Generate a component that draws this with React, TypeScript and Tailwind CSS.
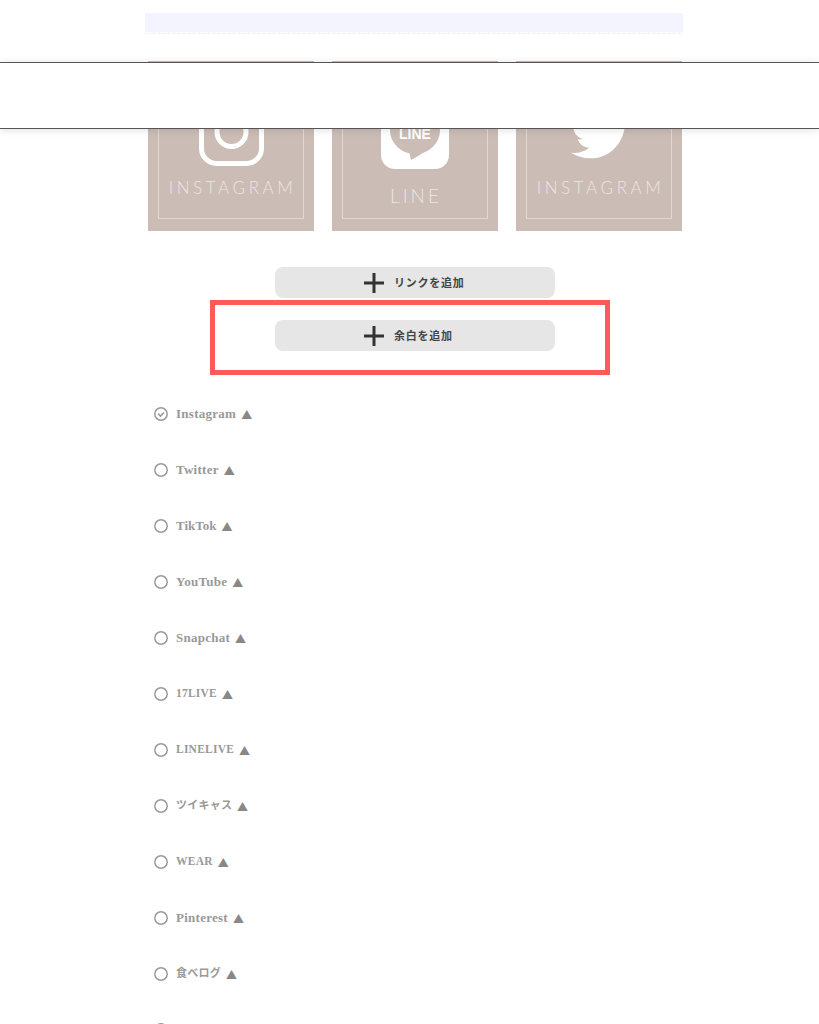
import { FaTwitter } from 'react-icons/fa';

const services = [
  { name: 'Instagram', size: 'text-[13px]' },
  { name: 'Twitter', size: 'text-[13px]' },
  { name: 'TikTok', size: 'text-[13px] tracking-[0px]' },
  { name: 'YouTube', size: 'text-[13px]' },
  { name: 'Snapchat', size: 'text-[13px]' },
  { name: '17LIVE', size: 'text-[11.5px]' },
  { name: 'LINELIVE', size: 'text-[11.5px]' },
  { name: 'ツイキャス', size: 'text-[11px]' },
  { name: 'WEAR', size: 'text-[11.5px]' },
  { name: 'Pinterest', size: 'text-[13px]' },
  { name: '食べログ', size: 'text-[11px]' },
];

const tileLabel =
  "mt-[11px] ml-[3px] font-['Lato'] text-[17px] font-light leading-[22px] tracking-[3.6px] text-[#ece6e2]";

function InstagramIcon() {
  return (
    <svg width="65" height="65" viewBox="0 0 65 65" fill="none" stroke="#fff" strokeWidth="5">
      <rect x="2.5" y="2.5" width="60" height="60" rx="15" />
      <circle cx="32.5" cy="31" r="14.5" />
    </svg>
  );
}

function LineIcon() {
  return (
    <svg width="68" height="68" viewBox="0 0 68 68">
      <rect width="68" height="68" rx="14" fill="#fff" />
      <ellipse cx="34" cy="29" rx="25" ry="24" fill="#cbbcb5" />
      <path d="M28 50 L30 59 C38 55 46 49 52 44 Z" fill="#cbbcb5" />
      <text
        x="34"
        y="38"
        textAnchor="middle"
        fill="#fff"
        fontSize="14"
        fontWeight="700"
        fontFamily="Liberation Sans, sans-serif"
      >
        LINE
      </text>
    </svg>
  );
}

function Tile({ icon, label, labelClass }: { icon: React.ReactNode; label: string; labelClass: string }) {
  return (
    <div className="h-[170px] w-[166px] bg-[#cbbcb5] px-[10px] pt-[12px] pb-[12px]">
      <div className="flex h-full flex-col items-center border border-[#e0d8d2] pt-[27px]">
        <div className="flex h-[65px] items-start justify-center">{icon}</div>
        <div className={labelClass}>{label}</div>
      </div>
    </div>
  );
}

function AddButton({ label, className }: { label: string; className: string }) {
  return (
    <div className={`flex h-[31px] w-[280px] items-center rounded-lg bg-[#e6e6e6] pl-[89px] ${className}`}>
      <svg width="20" height="20" viewBox="0 0 20 20" fill="#333">
        <rect x="0" y="8.5" width="20" height="3" />
        <rect x="8.5" y="0" width="3" height="20" />
      </svg>
      <span className="mt-[1px] ml-[10px] text-[11px] font-bold tracking-[0.07em] text-[#444]">{label}</span>
    </div>
  );
}

function Radio({ checked }: { checked: boolean }) {
  return (
    <svg width="14" height="14" viewBox="0 0 14 14" fill="none" stroke="#9a9a9a" strokeWidth="1.5">
      <circle cx="7" cy="7" r="6.2" />
      {checked && <path d="M4 6.6 L6.5 9.1 L10 5.4" />}
    </svg>
  );
}

export default function App() {
  return (
    <div
      className="relative h-[1024px] overflow-hidden bg-white"
      style={{ fontFamily: '"Noto Sans", "Noto Sans CJK JP", sans-serif' }}
    >
      <div className="ml-[145px] w-[538px] pt-[13px]">
        <div className="relative h-[21px] bg-[#f4f4ff] pb-[1px]">
          <div className="h-[20px] border-b border-dashed border-white" />
        </div>

        <div className="mt-[27px] ml-[3px] flex gap-[18px]">
          <Tile icon={<InstagramIcon />} label="INSTAGRAM" labelClass={tileLabel} />
          <Tile
            icon={<LineIcon />}
            label="LINE"
            labelClass="mt-[18px] ml-[2px] font-['Lato'] text-[19px] font-light leading-[24px] tracking-[3px] text-[#ece6e2]"
          />
          <Tile
            icon={<FaTwitter size={60} color="#fff" className="mt-[3px] ml-[3px]" />}
            label="INSTAGRAM"
            labelClass={tileLabel}
          />
        </div>

        <AddButton label="リンクを追加" className="mt-[36px] ml-[130px]" />

        <div className="mt-[2px] ml-[65px] h-[75px] w-[400px] border-[5px] border-[#ff5a5a] pt-[15px] pl-[60px]">
          <AddButton label="余白を追加" className="" />
        </div>

        <div className="mt-[11px] ml-[9px]">
          {services.map((item, i) => (
            <div key={item.name} className="flex h-[56px] items-center">
              <Radio checked={i === 0} />
              <span
                className={`mb-[1px] ml-[8px] font-['Liberation_Serif','Noto_Sans_CJK_JP',serif] font-bold leading-none tracking-[0.02em] text-[#999] ${item.size}`}
              >
                {item.name}
              </span>
              <span className="mt-[1px] ml-[5px] text-[11px] leading-none text-[#888]">▲</span>
            </div>
          ))}
          <div className="flex h-[56px] items-center">
            <Radio checked={false} />
          </div>
        </div>
      </div>

      {/* 固定バー */}
      <div className="absolute top-[62px] right-0 left-0 h-[67px] border-y-[1.5px] border-[#555] bg-white shadow-[0_1px_8px_rgba(0,0,0,0.12)]" />
    </div>
  );
}
